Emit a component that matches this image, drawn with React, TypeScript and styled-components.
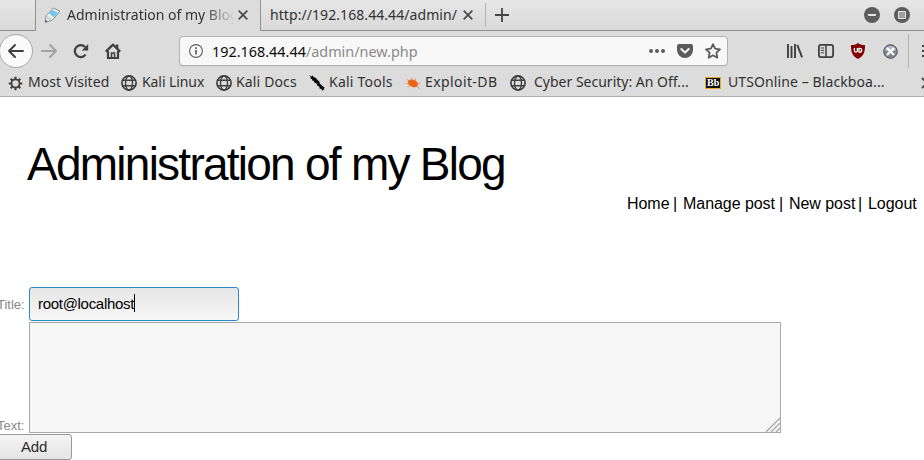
import React from "react";
import styled, { createGlobalStyle } from "styled-components";

const GlobalStyle = createGlobalStyle`
  * { box-sizing: border-box; }
  body { margin: 0; background: #fff; overflow: hidden; }
`;

const Window = styled.div`
  width: 924px;
  height: 460px;
  overflow: hidden;
  background: #fff;
  font-family: "Liberation Sans", Arial, sans-serif;
`;

const Chrome = styled.header`
  height: 97px;
  background: #dcdcdc;
  border-bottom: 1px solid #adadad;
  font-family: "Noto Sans", sans-serif;
  font-size: 14px;
  color: #323232;
  white-space: nowrap;
`;

const TabBar = styled.div`
  display: flex;
  height: 31px;
`;

const Strip = styled.div<{ $w?: number }>`
  display: flex;
  align-items: center;
  height: 31px;
  background: linear-gradient(#e6e6e6, #d9d9d9);
  border-bottom: 1px solid #929292;
  ${(p) => (p.$w ? `width: ${p.$w}px; flex: none;` : "flex: 1;")}
`;

const Tab = styled.div<{ $active?: boolean }>`
  display: flex;
  align-items: center;
  flex: none;
  height: 31px;
  width: ${(p) => (p.$active ? 226 : 227)}px;
  padding-left: ${(p) => (p.$active ? 8 : 9)}px;
  padding-bottom: ${(p) => (p.$active ? 1 : 0)}px;
  background: ${(p) => (p.$active ? "#dcdcdc" : "linear-gradient(#e6e6e6, #d9d9d9)")};
  border-left: ${(p) => (p.$active ? "1px solid #929292" : "none")};
  border-right: ${(p) => (p.$active ? "1px solid #929292" : "none")};
  border-bottom: ${(p) => (p.$active ? "none" : "1px solid #929292")};
`;

const TabTitle = styled.span<{ $w: number; $fade?: boolean; $ls: number; $ml?: number }>`
  width: ${(p) => p.$w}px;
  margin-left: ${(p) => p.$ml ?? 0}px;
  overflow: hidden;
  line-height: 20px;
  letter-spacing: ${(p) => p.$ls}px;
  ${(p) => p.$fade && "mask-image: linear-gradient(to right, #000 136px, transparent 168px);"}
`;

const Separator = styled.span<{ $h: number; $ml: number; $mr: number }>`
  flex: none;
  width: 1px;
  height: ${(p) => p.$h}px;
  margin: 0 ${(p) => p.$mr}px 0 ${(p) => p.$ml}px;
  background: #b4b4b4;
`;

const Icon = styled.svg<{ $ml?: number }>`
  display: block;
  flex: none;
  overflow: visible;
  margin-left: ${(p) => p.$ml ?? 0}px;
`;

const WindowButtons = styled.div`
  display: flex;
  gap: 14px;
  margin-left: auto;
  padding-right: 14px;
`;

const NavBar = styled.nav`
  display: flex;
  align-items: center;
  height: 40px;
`;

const BackButton = styled.div`
  display: flex;
  align-items: center;
  justify-content: center;
  flex: none;
  width: 34px;
  height: 34px;
  margin-left: -1px;
  border: 1px solid #a6a6a6;
  border-radius: 50%;
  background: #fafafa;
`;

const UrlBar = styled.div`
  display: flex;
  align-items: center;
  flex: none;
  width: 549px;
  height: 30px;
  margin-left: 58px;
  padding-left: 9px;
  border: 1px solid #b1b1b1;
  border-radius: 4px;
  background: #f8f8f8;
  box-shadow: 0 1px 1px #cfcfcf;
`;

const Url = styled.span`
  width: 436px;
  margin-left: 8px;
  padding-left: 1px;
  color: #8a8a8a;
  font-size: 14.4px;
  b { font-weight: 400; color: #0c0c0c; }
`;

const Bookmarks = styled.div`
  display: flex;
  height: 24px;
  padding-left: 8px;
`;

const Bookmark = styled.div<{ $w: number; $gap: number; $ls: number }>`
  display: flex;
  align-items: center;
  flex: none;
  width: ${(p) => p.$w}px;
  gap: ${(p) => p.$gap}px;
  letter-spacing: ${(p) => p.$ls}px;
`;

const BookmarkLabel = styled.span`
  line-height: 20px;
  padding-bottom: 2px;
`;

const Page = styled.main`
  display: flex;
  flex-direction: column;
`;

const Heading = styled.h1`
  margin: 41px 0 0 27px;
  height: 52px;
  line-height: 52px;
  font-size: 46px;
  font-weight: 400;
  letter-spacing: -1.75px;
  color: #000;
  white-space: nowrap;
`;

const Menu = styled.div`
  display: flex;
  margin: 5px 0 0 627px;
  height: 18px;
  line-height: 18px;
  font-size: 16px;
  letter-spacing: -0.05px;
  color: #000;
  white-space: nowrap;
`;

const MenuItem = styled.a<{ $w: number }>`
  display: flex;
  flex: none;
  width: ${(p) => p.$w}px;
  i { font-style: normal; margin-left: auto; margin-right: 6px; }
`;

const Form = styled.form`
  display: flex;
  flex-direction: column;
  margin-top: 74px;
`;

const Row = styled.div<{ $h: number }>`
  display: flex;
  align-items: flex-end;
  height: ${(p) => p.$h}px;
`;

const Label = styled.label<{ $pb: number }>`
  width: 32px;
  flex: none;
  margin-left: -3px;
  padding-bottom: ${(p) => p.$pb}px;
  font-size: 13px;
  line-height: 15px;
  color: #888;
`;

const TextField = styled.div`
  display: flex;
  align-items: center;
  width: 210px;
  height: 34px;
  padding: 0 0 2px 8px;
  border: 1px solid #2a8bcc;
  border-radius: 3px;
  background: linear-gradient(#e6e6e6, #f6f6f6);
  font-size: 15px;
  letter-spacing: -0.3px;
  color: #000;
`;

const Caret = styled.span`
  width: 1px;
  height: 18px;
  background: #000;
`;

const TextArea = styled.div`
  display: flex;
  align-items: flex-end;
  justify-content: flex-end;
  width: 752px;
  height: 111px;
  border: 1px solid #a9a9a9;
  background: #f6f6f6;
`;

const AddButton = styled.button`
  width: 76px;
  height: 26px;
  margin: 1px 0 0 -4px;
  padding: 0 0 1px;
  border: 1px solid #999;
  border-radius: 3px;
  background: linear-gradient(#f4f4f4, #e4e4e4);
  font: 15px "Liberation Sans", Arial, sans-serif;
  letter-spacing: -0.2px;
  color: #2c2c2c;
`;

const Close = ({ ml }: { ml: number }) => (
  <Icon $ml={ml} width="10" height="10" viewBox="0 0 10 10" stroke="#4a4a4a" strokeWidth="1.7">
    <path d="M.7.7 9.3 9.3M9.3.7.7 9.3" />
  </Icon>
);

const Globe = () => (
  <Icon width="16" height="16" viewBox="0 0 16 16" fill="none" stroke="#404040" strokeWidth="1.4">
    <circle cx="8" cy="8" r="7.1" strokeWidth="1.7" />
    <ellipse cx="8" cy="8" rx="3.5" ry="7" />
    <path d="M1.6 5.3h12.8M1.6 10.7h12.8" />
  </Icon>
);

const Gear = () => (
  <Icon width="15" height="15" viewBox="0 0 16 16" fill="none" stroke="#404040">
    <circle cx="8" cy="8" r="4.3" strokeWidth="1.9" />
    <path strokeWidth="2.2" d="M8 .8v2.5M8 12.7v2.5M.8 8h2.5M12.7 8h2.5M2.9 2.9l1.8 1.8M11.3 11.3l1.8 1.8M2.9 13.1l1.8-1.8M11.3 4.7l1.8-1.8" />
  </Icon>
);

const KaliTool = () => (
  <Icon width="16" height="16" viewBox="0 0 16 16" fill="#080808">
    <path d="M0 0 2.6 1.4 3.5.6 5 2.2 7 3 8.2 4.8 10.4 6.4 10.7 8.4 12.3 10 16 13 14.6 13.4 15.6 15.2 14 14.6 13.4 16 12 13.6 10.8 14 10.2 11.6 8.4 10.8 7.8 8.8 5.4 7.6 4.9 6 2.8 5.3 3.4 4.2 1.2 3.4 2 2.4z" />
  </Icon>
);

const Spider = () => (
  <Icon width="16" height="16" viewBox="0 0 16 16">
    <ellipse cx="8" cy="8.3" rx="5.2" ry="3.6" fill="#ec6316" transform="rotate(24 8 8.3)" />
    <path d="M2 4.5 6 8M6.5 2.5 8 7M10.5 3.5 9.5 7M.8 8.5 5 9M2.5 11.5 6 10.5M11 8l4 .5M12 11.5l2.5 2.2M8.5 11l1 2.3" stroke="#ee7a38" strokeWidth=".8" />
  </Icon>
);

const Blackboard = () => (
  <Icon width="16" height="12" viewBox="0 0 16 12">
    <path fill="#111" stroke="#e9a72b" d="M.5.5h15v11H.5z" />
    <text x="2" y="9.3" fill="#fff" fontFamily="Liberation Serif, serif" fontWeight="700" fontSize="10" letterSpacing="0">Bb</text>
  </Icon>
);

const bookmarks = [
  { text: "Most Visited", icon: <Gear />, w: 113, gap: 5, ls: 0.08 },
  { text: "Kali Linux", icon: <Globe />, w: 95, gap: 5, ls: -0.08 },
  { text: "Kali Docs", icon: <Globe />, w: 93, gap: 4, ls: 0.15 },
  { text: "Kali Tools", icon: <KaliTool />, w: 96, gap: 4, ls: 0.22 },
  { text: "Exploit-DB", icon: <Spider />, w: 105, gap: 4, ls: 0.4 },
  { text: "Cyber Security: An Off...", icon: <Globe />, w: 195, gap: 8, ls: 0 },
  { text: "UTSOnline – Blackboa...", icon: <Blackboard />, w: 216, gap: 7, ls: 0.1 },
];

export default function App() {
  return (
    <Window>
      <GlobalStyle />
      <Chrome>
        <TabBar>
          <Strip $w={35} />
          <Tab $active>
            <Icon width="17" height="17" viewBox="0 0 17 17">
              <path d="M1.2 15.5 2 8.8 9.5 1l6.3 3-7.2 9z" fill="#edf3f5" stroke="#8a8f92" />
              <path d="M5 6.4 8.3 3l5.3 2.5-3.5 4.7z" fill="#6bc8ee" />
              <path d="m3.3 9 4.5 2.7-1.5 1.5-4-2z" fill="#c8ced1" />
              <path d="m1.2 15.5.4-2.7 2 1.2z" fill="#555" />
            </Icon>
            <TabTitle $w={168} $fade $ls={0} $ml={6}>Administration of my Blog</TabTitle>
            <Close ml={3} />
          </Tab>
          <Tab>
            <TabTitle $w={189} $ls={0.07}>http://192.168.44.44/admin/</TabTitle>
            <Close ml={4} />
            <Separator $h={24} $ml={12} $mr={0} />
          </Tab>
          <Strip>
            <Icon $ml={7} width="14" height="14" viewBox="0 0 14 14" stroke="#444" strokeWidth="1.8">
              <path d="M7 0v14M0 7h14" />
            </Icon>
            <WindowButtons>
              <Icon width="16" height="16" viewBox="0 0 16 16">
                <circle cx="8" cy="8" r="8" fill="#5c5c5c" />
                <path d="M4 8h8" stroke="#e4e4e4" strokeWidth="2" />
              </Icon>
              <Icon width="16" height="16" viewBox="0 0 16 16">
                <circle cx="8" cy="8" r="8" fill="#5c5c5c" />
                <path d="M4.5 4.5h7v7h-7z" fill="#a0a0a0" stroke="#e4e4e4" />
              </Icon>
            </WindowButtons>
          </Strip>
        </TabBar>

        <NavBar>
          <BackButton>
            <Icon width="16" height="14" viewBox="0 0 16 14" fill="none" stroke="#404040" strokeWidth="2" strokeLinecap="round" strokeLinejoin="round">
              <path d="M15 7H1M7 1 1 7l6 6" />
            </Icon>
          </BackButton>
          <Icon $ml={8} width="16" height="14" viewBox="0 0 16 14" fill="none" stroke="#a2a2a2" strokeWidth="2" strokeLinecap="round" strokeLinejoin="round">
            <path d="M1 7h14M9 1l6 6-6 6" />
          </Icon>
          <Icon $ml={16} width="16" height="16" viewBox="0 0 16 16" fill="none" stroke="#404040" strokeWidth="2.2">
            <path d="M12.6 11.7A6 6 0 1 1 12.2 4" />
            <path d="M15.2 1v6.4H8.8z" fill="#404040" stroke="none" />
          </Icon>
          <Icon $ml={16} width="16" height="16" viewBox="0 0 16 16" fill="none" stroke="#404040" strokeWidth="2.2">
            <path d="m.8 8.6 7.2-7 7.2 7" strokeLinejoin="round" />
            <path d="M3 8v7h10V8M12.2 1.5v4" />
            <path d="M6.5 15v-5h3v5" strokeWidth="1.5" />
          </Icon>
          <UrlBar>
            <Icon width="14" height="14" viewBox="0 0 14 14" fill="none" stroke="#5c5c5c">
              <circle cx="7" cy="7" r="6.4" strokeWidth="1.1" />
              <path d="M7 6v4.5M7 3.3v1.7" strokeWidth="1.7" />
            </Icon>
            <Url><b>192.168.44.44</b>/admin/new.php</Url>
            <Icon $ml={2} width="16" height="4" viewBox="0 0 16 4" fill="#5c5c5c">
              <circle cx="2" cy="2" r="2" /><circle cx="8" cy="2" r="2" /><circle cx="14" cy="2" r="2" />
            </Icon>
            <Icon $ml={12} width="16" height="14" viewBox="0 0 16 14">
              <path d="M2 0h12a2 2 0 0 1 2 2v4a8 8 0 0 1-16 0V2a2 2 0 0 1 2-2z" fill="#5c5c5c" />
              <path d="m4.3 5 3.7 3.6L11.7 5" fill="none" stroke="#f8f8f8" strokeWidth="2" strokeLinecap="round" strokeLinejoin="round" />
            </Icon>
            <Icon $ml={12} width="16" height="16" viewBox="0 0 16 16" fill="none" stroke="#5c5c5c" strokeWidth="1.8" strokeLinejoin="round">
              <path d="m8 1.2 2.1 4.5 4.9.6-3.6 3.4.9 5L8 12.2l-4.3 2.5.9-5L1 6.3l4.9-.6z" />
            </Icon>
          </UrlBar>
          <Icon $ml={59} width="16" height="14" viewBox="0 0 16 14" fill="none" stroke="#404040" strokeWidth="1.9">
            <path d="M1 0v14M4.5 2v12M8 0v14M10.3.8l4.8 12.5" />
          </Icon>
          <Icon $ml={15} width="16" height="14" viewBox="0 0 16 14" fill="none" stroke="#404040" strokeWidth="1.8">
            <rect x=".9" y=".9" width="14.2" height="12.2" rx="2" />
            <path d="M8 1v12" strokeWidth="1.5" />
            <path d="M2.8 4h3.3M2.8 6.4h3.3M2.8 8.8h3.3" strokeWidth="1" />
          </Icon>
          <Icon $ml={17} width="14" height="16" viewBox="0 0 14 16">
            <path d="M7 0c2 1.6 4.5 2.1 7 2.1C14 9 13 13 7 16 1 13 0 9 0 2.1 2.5 2.1 5 1.6 7 0z" fill="#800000" />
            <path d="M3.4 5v2.6a1.5 1.5 0 0 0 3 0V5M8 5.4v3.8h.8a1.9 1.9 0 0 0 0-3.8H8z" fill="none" stroke="#fff" strokeWidth="1.3" />
          </Icon>
          <Icon $ml={18} width="15" height="15" viewBox="0 0 15 15">
            <circle cx="7.5" cy="7.5" r="6.8" fill="#85858f" stroke="#50505a" />
            <path d="M2 6C3 .8 12 .8 13 6c-3 2-8 2-11 0z" fill="#b4b8ca" />
            <path d="m4 4 7 7m0-7-7 7" stroke="#fff" strokeWidth="2" />
          </Icon>
          <Separator $h={34} $ml={10} $mr={13} />
          <Icon width="16" height="12" viewBox="0 0 16 12" stroke="#404040" strokeWidth="2">
            <path d="M0 1h16M0 6h16M0 11h16" />
          </Icon>
        </NavBar>

        <Bookmarks>
          {bookmarks.map((b) => (
            <Bookmark key={b.text} $w={b.w} $gap={b.gap} $ls={b.ls}>
              {b.icon}
              <BookmarkLabel>{b.text}</BookmarkLabel>
            </Bookmark>
          ))}
          <Icon width="10" height="24" viewBox="0 0 10 24" fill="none" stroke="#404040" strokeWidth="1.8">
            <path d="m1 7 5 5-5 5" />
          </Icon>
        </Bookmarks>
      </Chrome>

      <Page>
        <Heading>Administration of my Blog</Heading>
        <Menu>
          <MenuItem $w={56}>Home<i>|</i></MenuItem>
          <MenuItem $w={106}>Manage post<i>|</i></MenuItem>
          <MenuItem $w={79}>New post<i>|</i></MenuItem>
          <MenuItem $w={50}>Logout</MenuItem>
        </Menu>
        <Form>
          <Row $h={34}>
            <Label $pb={9}>Title:</Label>
            <TextField>root@localhost<Caret /></TextField>
          </Row>
          <Row $h={112}>
            <Label $pb={0}>Text:</Label>
            <TextArea>
              <Icon width="15" height="15" viewBox="0 0 15 15" stroke="#a6a6a6" strokeWidth="1.2">
                <path d="M1 15 15 1M6 15l9-9M11 15l4-4" />
              </Icon>
            </TextArea>
          </Row>
          <AddButton type="button">Add</AddButton>
        </Form>
      </Page>
    </Window>
  );
}
